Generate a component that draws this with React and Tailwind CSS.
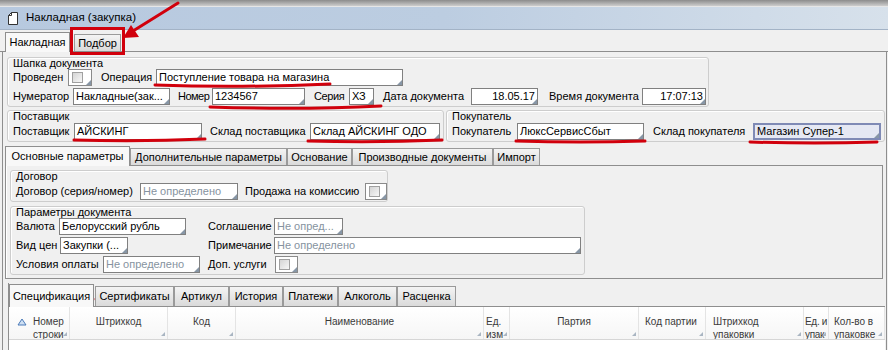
import React from "react";

const Corner = () => (
  <span className="absolute right-0 bottom-0 h-0 w-0 border-l-[5px] border-b-[5px] border-l-transparent border-b-[#8796a6]" />
);

const Field = ({ w, text, gray, right, active }) => (
  <div
    className={`relative ${w} h-[17px] shrink-0 overflow-hidden whitespace-nowrap px-[2px] ${
      active
        ? "border-2 border-[#7f8ab5] bg-[#e5e8f3] leading-[13px]"
        : "border border-[#808080] bg-white leading-[15px]"
    } ${gray ? "text-[#8693a0]" : "text-black"} ${right ? "text-right" : ""}`}
  >
    {text}
    <Corner />
  </div>
);

const Check = ({ w }) => (
  <div className={`relative ${w} h-[17px] shrink-0 flex items-center pl-[3px] border border-[#8a8a8a] bg-white`}>
    <div className="w-[11px] h-[11px] border border-[#a0a0a0] bg-gradient-to-br from-[#d4d4d4] to-[#f7f7f7]" />
    <Corner />
  </div>
);

const L = ({ w, className = "", children }) => (
  <span className={`${w} shrink-0 whitespace-nowrap ${className}`}>{children}</span>
);

const Group = ({ title, className, children }) => (
  <div className={`shrink-0 border border-[#cdcdcd] rounded-[3px] shadow-[inset_1px_1px_0_#fff] ${className}`}>
    <div className="h-[10px] leading-[10px] pl-[5px] whitespace-nowrap">{title}</div>
    {children}
  </div>
);

const Row = ({ h = "h-[19px]", children }) => (
  <div className={`${h} flex items-center pl-[5px]`}>{children}</div>
);

const Tab = ({ w, active, h, children }) =>
  active ? (
    <div className={`${w} ${h} -mb-px relative z-10 shrink-0 flex items-center justify-center whitespace-nowrap border border-b-0 border-[#8e8e8e] bg-[#f8f8f8]`}>
      {children}
    </div>
  ) : (
    <div className={`${w} ${h} shrink-0 flex items-center justify-center whitespace-nowrap border border-b-0 border-[#9a9a9a] bg-gradient-to-b from-[#f4f4f4] to-[#dadada]`}>
      {children}
    </div>
  );

const Head = ({ w, className = "", children }) => (
  <div className={`relative ${w} shrink-0 h-full overflow-hidden border-r border-[#e4e4e4] pt-[8px] leading-[13px] ${className}`}>
    {children}
    <span className="absolute right-[2px] bottom-[3px] h-0 w-0 border-l-[4px] border-b-[4px] border-l-transparent border-b-[#a9b5c2]" />
  </div>
);

export default function App() {
  return (
    <div className="relative w-[888px] h-[350px] overflow-hidden bg-[#f0f0f0] font-['Liberation_Sans',Arial,sans-serif] text-[11px] text-black">
      <div className="h-[7px] bg-gradient-to-b from-[#8c8c8c] to-[#cdcdcd] border-b border-[#e6e6e6]" />

      <div className="h-[23px] flex items-center bg-gradient-to-r from-[#b7c9df] via-[#bccde1] to-[#d7e1eb] border-b border-[#a3b3c6]">
        <svg className="ml-[8px]" width="10" height="13" viewBox="0 0 10 13">
          <path d="M3.5 0.5H9.5V12.5H0.5V3.5Z" fill="#fff" stroke="#333" />
          <path d="M0.5 3.5H3.5V0.5" fill="none" stroke="#333" />
        </svg>
        <span className="ml-[8px] text-[11.5px]">Накладная (закупка)</span>
      </div>

      <div className="h-[22px] flex items-end pl-[5px] border-b border-[#8e8e8e]">
        <Tab w="w-[65px]" h="h-[20px]" active>
          Накладная
        </Tab>
        <div className="ml-[4px]">
          <Tab w="w-[47px]" h="h-[17px]">
            Подбор
          </Tab>
        </div>
      </div>

      <div className="ml-[2px] w-[885px] h-[298px] flex flex-col border-x border-[#8e8e8e]">
        <Group title="Шапка документа" className="mt-[5px] ml-[4px] w-[702px]">
          <Row>
            <L w="w-[55px]">Проведен</L>
            <Check w="w-[24px]" />
            <span className="ml-[9px]" />
            <L w="w-[55px]">Операция</L>
            <Field w="w-[247px]" text="Поступление товара на магазина" />
          </Row>
          <Row>
            <L w="w-[60px]">Нумератор</L>
            <Field w="w-[97px]" text="Накладные(зак..." />
            <span className="ml-[8px]" />
            <L w="w-[34px]" className="tracking-[-0.5px]">Номер</L>
            <Field w="w-[93px]" text="1234567" />
            <span className="ml-[9px]" />
            <L w="w-[35px]" className="tracking-[-0.4px]">Серия</L>
            <Field w="w-[25px]" text="ХЗ" />
            <span className="ml-[9px]" />
            <L w="w-[88px]">Дата документа</L>
            <Field w="w-[67px]" text="18.05.17" right />
            <span className="ml-[11px]" />
            <L w="w-[93px]">Время документа</L>
            <Field w="w-[64px]" text="17:07:13" right />
          </Row>
        </Group>

        <div className="mt-[3px] flex">
          <Group title="Поставщик" className="ml-[4px] w-[437px]">
            <Row h="h-[20px]">
              <L w="w-[61px]">Поставщик</L>
              <Field w="w-[128px]" text="АЙСКИНГ" />
              <span className="ml-[8px]" />
              <L w="w-[100px]">Склад поставщика</L>
              <Field w="w-[130px]" text="Склад АЙСКИНГ ОДО" />
            </Row>
          </Group>
          <Group title="Покупатель" className="ml-[2px] w-[439px]">
            <Row h="h-[20px]">
              <L w="w-[65px]">Покупатель</L>
              <Field w="w-[127px]" text="ЛюксСервисСбыт" />
              <span className="ml-[9px]" />
              <L w="w-[100px]">Склад покупателя</L>
              <Field w="w-[128px]" text="Магазин Супер-1" active />
            </Row>
          </Group>
        </div>

        <div className="mt-[3px] ml-[2px] w-[878px]">
          <div className="h-[21px] flex items-end border-b border-[#8e8e8e]">
            <Tab w="w-[125px]" h="h-[20px]" active>
              Основные параметры
            </Tab>
            <Tab w="w-[157px]" h="h-[17px]">
              Дополнительные параметры
            </Tab>
            <Tab w="w-[65px]" h="h-[17px]">
              Основание
            </Tab>
            <Tab w="w-[141px]" h="h-[17px]">
              Производные документы
            </Tab>
            <Tab w="w-[47px]" h="h-[17px]">
              Импорт
            </Tab>
          </div>
          <div className="h-[113px] flex flex-col border-x border-b border-[#8e8e8e] pl-[4px] shadow-[inset_1px_0_0_#fff]">
            <Group title="Договор" className="mt-[4px] w-[378px]">
              <Row h="h-[20px]">
                <L w="w-[124px]">Договор (серия/номер)</L>
                <Field w="w-[98px]" text="Не определено" gray />
                <span className="ml-[7px]" />
                <L w="w-[120px]">Продажа на комиссию</L>
                <Check w="w-[22px]" />
              </Row>
            </Group>
            <Group title="Параметры документа" className="mt-[4px] w-[575px]">
              <Row>
                <div className="w-[192px] shrink-0 flex items-center">
                  <L w="w-[43px]">Валюта</L>
                  <Field w="w-[127px]" text="Белорусский рубль" />
                </div>
                <L w="w-[66px]">Соглашение</L>
                <Field w="w-[69px]" text="Не опред..." gray />
              </Row>
              <Row>
                <div className="w-[192px] shrink-0 flex items-center">
                  <L w="w-[44px]">Вид цен</L>
                  <Field w="w-[68px]" text="Закупки (..." />
                </div>
                <L w="w-[66px]">Примечание</L>
                <Field w="w-[307px]" text="Не определено" gray />
              </Row>
              <Row>
                <div className="w-[192px] shrink-0 flex items-center">
                  <L w="w-[87px]">Условия оплаты</L>
                  <Field w="w-[97px]" text="Не определено" gray />
                </div>
                <L w="w-[67px]">Доп. услуги</L>
                <Check w="w-[23px]" />
              </Row>
            </Group>
          </div>
        </div>

        <div className="mt-[4px] ml-[5px] w-[877px] border-l border-[#8e8e8e]">
          <div className="h-[24px] flex items-end border-b border-[#8e8e8e]">
            <Tab w="w-[85px]" h="h-[23px]" active>
              Спецификация
            </Tab>
            <div className="w-[1px]" />
            <Tab w="w-[79px]" h="h-[20px]">
              Сертификаты
            </Tab>
            <Tab w="w-[55px]" h="h-[20px]">
              Артикул
            </Tab>
            <Tab w="w-[54px]" h="h-[20px]">
              История
            </Tab>
            <Tab w="w-[55px]" h="h-[20px]">
              Платежи
            </Tab>
            <Tab w="w-[59px]" h="h-[20px]">
              Алкоголь
            </Tab>
            <Tab w="w-[59px]" h="h-[20px]">
              Расценка
            </Tab>
          </div>
          <div className="h-[33px] flex border-b border-[#d6d6d6] bg-gradient-to-b from-white to-[#f6f6f6] text-[10px] text-[#3a3a3a]">
            <Head w="w-[61px]" className="flex">
              <svg className="ml-[8px] mt-[3px] shrink-0" width="10" height="8" viewBox="0 0 10 8">
                <path d="M1 7L5 1L9 7Z" fill="#cfe0f3" stroke="#4a7ab8" />
              </svg>
              <div className="ml-[6px]">
                Номер
                <br />
                строки
              </div>
            </Head>
            <Head w="w-[98px]" className="text-center">Штрихкод</Head>
            <Head w="w-[68px]" className="text-center">Код</Head>
            <Head w="w-[248px]" className="text-center">Наименование</Head>
            <Head w="w-[26px]" className="pl-[2px]">
              Ед.
              <br />
              изм
            </Head>
            <Head w="w-[129px]" className="text-center">Партия</Head>
            <Head w="w-[67px]" className="pl-[6px] whitespace-nowrap">Код партии</Head>
            <Head w="w-[98px]" className="pl-[7px]">
              Штрихкод
              <br />
              упаковки
            </Head>
            <Head w="w-[25px]" className="pl-[1px] whitespace-nowrap tracking-[-0.3px]">
              Ед. и
              <br />
              упак
            </Head>
            <Head w="w-[56px]" className="pl-[5px] whitespace-nowrap">
              Кол-во в
              <br />
              упаковке
            </Head>
          </div>
          <div className="h-[20px] bg-white" />
        </div>
      </div>

      <svg className="absolute inset-0 pointer-events-none" width="888" height="350" viewBox="0 0 888 350">
        <g fill="none" stroke="#d1000c" strokeWidth="3" strokeLinecap="round">
          <rect x="71.5" y="28.5" width="52" height="25" />
          <path d="M178 3L133 31" />
          <path d="M155 85Q240 88 330 84" />
          <path d="M210 107Q300 110 381 106" />
          <path d="M74 140Q140 142 205 139" />
          <path d="M308 141Q375 143 442 140" />
          <path d="M516 141Q580 143 645 141" />
          <path d="M750 142Q815 144 877 142" />
          <path d="M12 300Q50 302 93 299" />
        </g>
        <path d="M123 38L131 25L139 37Z" fill="#d1000c" />
      </svg>
    </div>
  );
}
